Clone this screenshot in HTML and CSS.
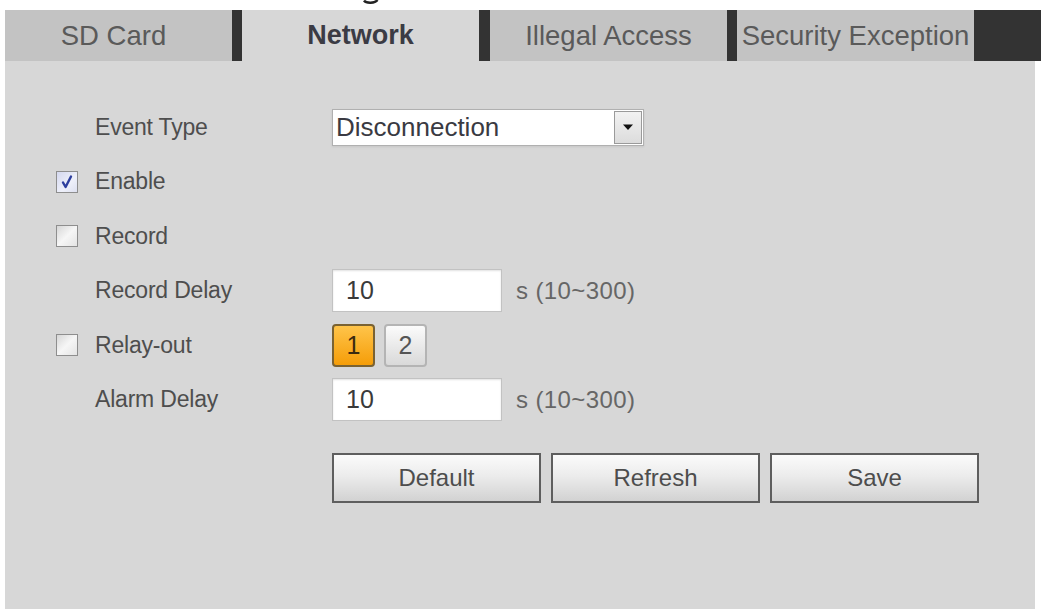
FILE: index.html
```html
<!DOCTYPE html>
<html lang="en">
<head>
<meta charset="utf-8">
<title>Network Exception</title>
<link rel="stylesheet" href="styles.css">
</head>
<body>
<div class="caption"><svg class="caption-tail" width="18" height="5" viewBox="0 0 18 5"><path d="M2 0.5C4 3.5 13 3.5 15.5 0" fill="none" stroke="#222" stroke-width="2.4"/></svg></div>
<div class="tabs">
  <div class="tab tab-first">SD Card</div>
  <div class="sep"></div>
  <div class="tab tab-active">Network</div>
  <div class="sep sep-wide"></div>
  <div class="tab">Illegal Access</div>
  <div class="sep"></div>
  <div class="tab">Security Exception</div>
  <div class="tab-end"></div>
</div>
<div class="panel">
  <div class="row">
    <span class="slot"></span>
    <span class="lbl">Event Type</span>
    <div class="select">
      <span class="select-text">Disconnection</span>
      <span class="select-btn"><svg width="12" height="8" viewBox="0 0 12 8"><path d="M1 1.5h10L6 7z" fill="#111"/></svg></span>
    </div>
  </div>
  <div class="row">
    <span class="slot"><span class="cb cb-on"><svg width="16" height="16" viewBox="0 0 16 16"><path d="M4 8.5l2.6 4.5L12 2.5" fill="none" stroke="#2e3f9e" stroke-width="2.4" stroke-linecap="round" stroke-linejoin="round"/></svg></span></span>
    <span class="lbl">Enable</span>
  </div>
  <div class="row">
    <span class="slot"><span class="cb"></span></span>
    <span class="lbl">Record</span>
  </div>
  <div class="row">
    <span class="slot"></span>
    <span class="lbl">Record Delay</span>
    <div class="ctl"><div class="input">10</div><span class="unit">s (10~300)</span></div>
  </div>
  <div class="row">
    <span class="slot"><span class="cb"></span></span>
    <span class="lbl">Relay-out</span>
    <div class="ctl"><span class="relay relay-on">1</span><span class="relay">2</span></div>
  </div>
  <div class="row">
    <span class="slot"></span>
    <span class="lbl">Alarm Delay</span>
    <div class="ctl"><div class="input">10</div><span class="unit">s (10~300)</span></div>
  </div>
  <div class="actions">
    <span class="btn">Default</span>
    <span class="btn">Refresh</span>
    <span class="btn">Save</span>
  </div>
</div>
</body>
</html>
```

FILE: styles.css
```css
html, body {
  margin: 0;
  padding: 0;
  background: #ffffff;
  font-family: "Liberation Sans", Arial, sans-serif;
  overflow: hidden;
}

.caption {
  height: 10px;
  padding-left: 362px;
}

.caption-tail {
  display: block;
}

.tabs {
  display: flex;
  height: 51px;
  margin-left: 5px;
  width: 1036px;
}

.tab {
  width: 237px;
  background: #c3c3c3;
  color: #5a5a5a;
  font-size: 27.5px;
  display: flex;
  align-items: center;
  justify-content: center;
  white-space: nowrap;
}

.tab-first {
  width: 217px;
  padding-right: 10px;
}

.tab-active {
  background: #d7d7d7;
  color: #3b3b44;
  font-weight: bold;
  font-size: 27px;
}

.sep {
  width: 10px;
  background: #333333;
}

.sep-wide {
  width: 11px;
}

.tab-end {
  flex: 1;
  background: #333333;
}

.panel {
  box-sizing: border-box;
  background: #d7d7d7;
  width: 1030px;
  height: 548px;
  margin-left: 5px;
  padding: 39px 0 0 51px;
}

.row {
  display: flex;
  align-items: center;
  height: 54.5px;
}

.slot {
  width: 39px;
  display: flex;
  align-items: center;
}

.lbl {
  width: 237px;
  font-size: 23px;
  color: #4e4e4e;
  letter-spacing: -0.2px;
}

.cb {
  width: 20px;
  height: 20px;
  border: 1px solid #8e8e8e;
  background: linear-gradient(135deg, #d6d6d6 0%, #f6f6f6 50%, #e4e4e4 100%);
  display: flex;
  align-items: center;
  justify-content: center;
}

.cb-on {
  background: linear-gradient(135deg, #d4d8ee 0%, #eef0fa 60%, #dde0f0 100%);
}

.select {
  width: 310px;
  height: 35px;
  border: 1px solid #b0b0b0;
  background: #ffffff;
  display: flex;
  align-items: center;
  justify-content: space-between;
  box-shadow: 0 1px 2px rgba(0, 0, 0, 0.08);
}

.select-text {
  padding-left: 3px;
  font-size: 26px;
  color: #3a3a42;
}

.select-btn {
  width: 28px;
  height: 33px;
  margin-right: 1px;
  border: 1px solid #9a9a9a;
  background: linear-gradient(#f2f2f2, #dcdcdc);
  display: flex;
  align-items: center;
  justify-content: center;
  box-sizing: border-box;
}

.ctl {
  display: flex;
  align-items: center;
}

.input {
  width: 155px;
  height: 41px;
  border: 1px solid #c2c2c2;
  background: #ffffff;
  padding-left: 13px;
  font-size: 25px;
  color: #3a3a3a;
  display: flex;
  align-items: center;
  box-shadow: inset 0 1px 2px rgba(0, 0, 0, 0.12);
}

.unit {
  margin-left: 14px;
  font-size: 24px;
  color: #666666;
  letter-spacing: 0.4px;
}

.relay {
  width: 39px;
  height: 39px;
  border: 2px solid #b4b4b4;
  border-radius: 4px;
  background: linear-gradient(#fbfbfb, #d9d9d9);
  color: #555555;
  font-size: 25px;
  display: flex;
  align-items: center;
  justify-content: center;
  margin-right: 9px;
}

.relay-on {
  border-color: #7a6232;
  background: linear-gradient(#ffc44a, #f59d08);
  color: #3a2a10;
}

.actions {
  display: flex;
  gap: 10px;
  margin-top: 26px;
  margin-left: 276px;
}

.btn {
  width: 205px;
  height: 46px;
  border: 2px solid #5e5e5e;
  background: linear-gradient(#fbfbfb 0%, #ececec 45%, #d2d2d2 100%);
  color: #4d4d4d;
  font-size: 24px;
  display: flex;
  align-items: center;
  justify-content: center;
}
```
